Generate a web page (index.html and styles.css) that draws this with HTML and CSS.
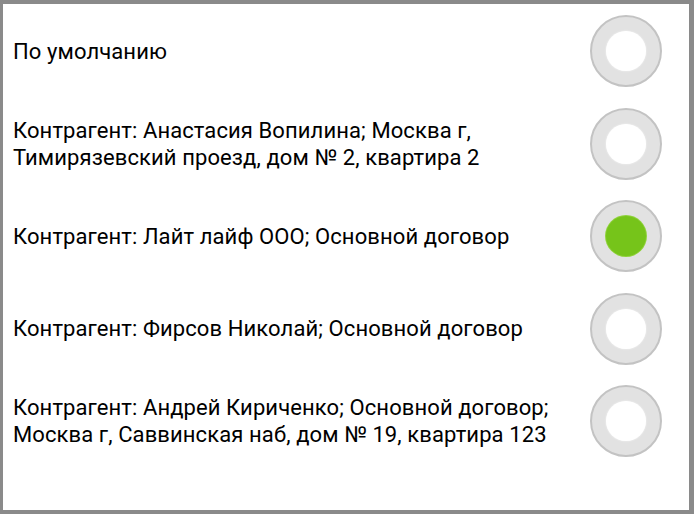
FILE: index.html
```html
<!DOCTYPE html>
<html lang="ru">
<head>
<meta charset="utf-8">
<link rel="stylesheet" href="styles.css">
</head>
<body>
<div class="frame">
  <ul class="list">
    <li class="row">
      <span class="label">По умолчанию</span>
      <span class="radio"></span>
    </li>
    <li class="row">
      <span class="label">Контрагент: Анастасия Вопилина; Москва г, Тимирязевский проезд, дом № 2, квартира 2</span>
      <span class="radio"></span>
    </li>
    <li class="row">
      <span class="label">Контрагент: Лайт лайф ООО; Основной договор</span>
      <span class="radio checked"></span>
    </li>
    <li class="row">
      <span class="label">Контрагент: Фирсов Николай; Основной договор</span>
      <span class="radio"></span>
    </li>
    <li class="row">
      <span class="label">Контрагент: Андрей Кириченко; Основной договор; Москва г, Саввинская наб, дом № 19, квартира 123</span>
      <span class="radio"></span>
    </li>
  </ul>
</div>
</body>
</html>
```
FILE: styles.css
```css
html, body {
  margin: 0;
  padding: 0;
  background: #fff;
}
.frame {
  box-sizing: border-box;
  width: 694px;
  height: 514px;
  border-style: solid;
  border-color: #8a8a8a;
  border-width: 4px 5px 4px 3px;
  background: #fff;
  padding-top: 1px;
}
.list {
  list-style: none;
  margin: 0;
  padding: 0;
}
.row {
  display: flex;
  align-items: center;
  height: 92.5px;
  padding-left: 10px;
  padding-right: 27px;
}
.label {
  flex: 1;
  margin-right: 14px;
  font-family: Roboto, "Noto Sans", sans-serif;
  font-size: 22px;
  line-height: 27px;
  letter-spacing: 0.1px;
  color: #000;
}
.radio {
  box-sizing: border-box;
  width: 72px;
  height: 72px;
  flex: 0 0 72px;
  border-radius: 50%;
  background: #e2e2e2;
  border: 2px solid #c3c3c3;
  display: flex;
  align-items: center;
  justify-content: center;
}
.radio::after {
  content: "";
  width: 40px;
  height: 40px;
  border-radius: 50%;
  background: #fff;
  box-shadow: 0 0 2px rgba(255,255,255,0.8);
}
.radio.checked::after {
  background: #76c41a;
  box-shadow: 0 0 0 1px #8fd23a;
}
```
